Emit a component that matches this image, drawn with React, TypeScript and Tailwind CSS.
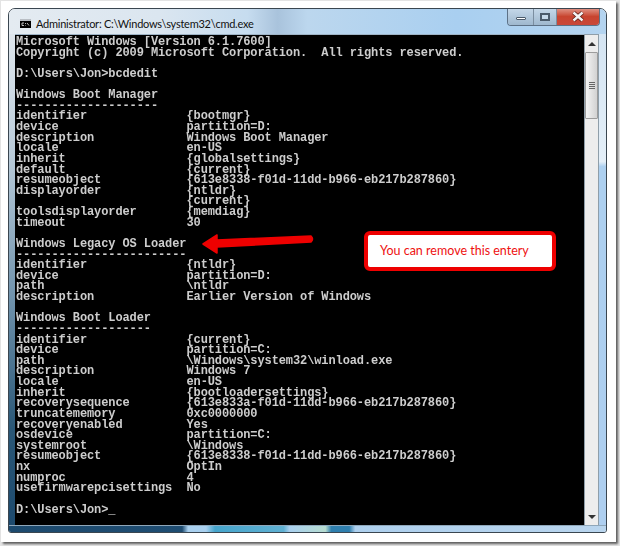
const LINES = [
  "Microsoft Windows [Version 6.1.7600]",
  "Copyright (c) 2009 Microsoft Corporation.  All rights reserved.",
  "",
  "D:\\Users\\Jon>bcdedit",
  "",
  "Windows Boot Manager",
  "--------------------",
  "identifier              {bootmgr}",
  "device                  partition=D:",
  "description             Windows Boot Manager",
  "locale                  en-US",
  "inherit                 {globalsettings}",
  "default                 {current}",
  "resumeobject            {613e8338-f01d-11dd-b966-eb217b287860}",
  "displayorder            {ntldr}",
  "                        {current}",
  "toolsdisplayorder       {memdiag}",
  "timeout                 30",
  "",
  "Windows Legacy OS Loader",
  "------------------------",
  "identifier              {ntldr}",
  "device                  partition=D:",
  "path                    \\ntldr",
  "description             Earlier Version of Windows",
  "",
  "Windows Boot Loader",
  "-------------------",
  "identifier              {current}",
  "device                  partition=C:",
  "path                    \\Windows\\system32\\winload.exe",
  "description             Windows 7",
  "locale                  en-US",
  "inherit                 {bootloadersettings}",
  "recoverysequence        {613e833a-f01d-11dd-b966-eb217b287860}",
  "truncatememory          0xc0000000",
  "recoveryenabled         Yes",
  "osdevice                partition=C:",
  "systemroot              \\Windows",
  "resumeobject            {613e8338-f01d-11dd-b966-eb217b287860}",
  "nx                      OptIn",
  "numproc                 4",
  "usefirmwarepcisettings  No",
  "",
  "D:\\Users\\Jon>_",
];

export default function App() {
  return (
    <div className="h-[546px] w-[620px] overflow-hidden bg-[#e4e4e4] pl-[1px] pt-[1px]">
      {/* photo frame */}
      <div className="h-[541px] w-[615px] bg-white pl-[7px] pt-[7px] shadow-[2px_2px_2px_#5f5f5f]">
        {/* aero window */}
        <div className="relative flex h-[525px] w-[599px] flex-col overflow-hidden rounded-t-[7px] rounded-b-[3px] border border-[#3a4650]">
          <div className="flex h-[25px] shrink-0 items-center bg-[linear-gradient(90deg,#e4ebf1_0%,#dbe6f0_25%,#c6dcef_40%,#a9c3dc_45%,#bcd7ee_50%,#a9cff0_75%,#b4d4f0_100%)] pl-[11px] pt-[4px]">
            <svg width="11" height="9" viewBox="0 0 11 9">
              <rect width="11" height="9" fill="#000" />
              <rect width="11" height="2" fill="#b9bec4" />
              <path d="M2 4h2M2 4v2.5h2M5.5 4v1M5.5 6v.5M7 4l2 2.5" stroke="#e8e8e8" strokeWidth="0.8" fill="none" />
            </svg>
            <span className="ml-[5px] font-['Lato',sans-serif] text-[11px] leading-none tracking-[-0.25px] text-[#111]">
              Administrator: C:\Windows\system32\cmd.exe
            </span>
          </div>

          {/* caption buttons */}
          <div className="absolute right-[6px] top-[-1px] flex h-[18px] overflow-hidden rounded-b-[4px] border border-t-0 border-[#5d7186]">
            <div className="flex w-[26px] items-end justify-center border-r border-[#7b8ea0] bg-gradient-to-b from-[#c6d9ea] to-[#9fb8ce] pb-[5px]">
              <div className="h-[3px] w-[10px] rounded-[1px] border border-[#4b5b6b] bg-white" />
            </div>
            <div className="flex w-[23px] items-center justify-center border-r border-[#7b8ea0] bg-gradient-to-b from-[#c6d9ea] to-[#9fb8ce]">
              <div className="h-[8px] w-[10px] border-2 border-[#4b5b6b] bg-[#c6d9ea]" />
            </div>
            <div className="flex w-[42px] items-center justify-center bg-gradient-to-b from-[#e0988c] via-[#c8442f] to-[#c9483a]">
              <svg width="14" height="11" viewBox="0 0 14 11">
                <path d="M2.5 1.5 L11.5 9.5 M11.5 1.5 L2.5 9.5" stroke="#5a2018" strokeWidth="4" />
                <path d="M2.5 1.5 L11.5 9.5 M11.5 1.5 L2.5 9.5" stroke="#f4f4f4" strokeWidth="2.4" />
              </svg>
            </div>
          </div>

          <div className="flex min-h-0 flex-1">
            <div className="w-[6px] bg-[linear-gradient(180deg,#dfe6ec_0%,#b9cbd9_25%,#6d90aa_55%,#2b5877_80%,#1d4a6e_100%)]" />
            <div className="flex-1 border-t border-[#9fb4c6] bg-black pl-[1px] pt-[2px]">
              {LINES.map((line, i) => (
                <div
                  key={i}
                  className="h-[10.64px] w-fit whitespace-pre font-['Liberation_Mono',monospace] text-[12px] font-bold leading-[10.64px] tracking-[-0.1px] text-[#cdcdcd] blur-[0.4px]"
                >
                  {line}
                </div>
              ))}
            </div>

            {/* scrollbar */}
            <div className="flex w-[15px] flex-col border-x border-t border-[#8f9ea9] bg-[#ededed]">
              <div className="flex h-[17px] shrink-0 items-center justify-center">
                <div className="h-0 w-0 border-x-[4px] border-b-[4px] border-x-transparent border-b-[#333]" />
              </div>
              <div className="flex h-[67px] shrink-0 flex-col items-center justify-center gap-[1px] rounded-[1px] border border-[#9c9c9c] bg-gradient-to-r from-[#f4f4f4] to-[#d2d2d2]">
                <div className="h-[1px] w-[6px] bg-[#666]" />
                <div className="h-[1px] w-[6px] bg-[#666]" />
                <div className="h-[1px] w-[6px] bg-[#666]" />
                <div className="h-[1px] w-[6px] bg-[#666]" />
              </div>
              <div className="flex-1" />
              <div className="flex h-[17px] shrink-0 items-center justify-center">
                <div className="h-0 w-0 border-x-[4px] border-t-[4px] border-x-transparent border-t-[#333]" />
              </div>
            </div>
            <div className="w-[7px] bg-[linear-gradient(180deg,#d5e5f3_0%,#e4eff8_26%,#add0f0_27%,#aecff0_100%)]" />
          </div>

          {/* bottom edge of the glass */}
          <div className="h-[7px] shrink-0 border-t border-[#8fa7ba] bg-[linear-gradient(90deg,#1d4a6e_0%,#1f4d72_29%,#a9d0ef_30%,#a9d0ef_33%,#46a5cc_34.5%,#5fb0d2_46%,#a9d0ef_47%,#b6dcd0_53%,#2f7fae_54%,#2f7fae_57%,#aed0ee_58%,#b9d5ee_100%)]" />

          {/* annotation */}
          <svg className="absolute left-[185px] top-[216px]" width="120" height="30" viewBox="0 0 120 30">
            <path d="M9 19 L23 10 L23 15 L117 11 Q120 14 117 17 L23 22 L23 28 Z" fill="#ee0000" stroke="#ee0000" strokeWidth="1.5" strokeLinejoin="round" />
          </svg>
          <div className="absolute left-[355px] top-[222px] flex h-[40px] w-[192px] items-center rounded-[6px] border-[4px] border-[#ee0000] bg-white pl-[12px] font-['Lato',sans-serif] text-[12.5px] text-[#ee1111]">
            You can remove this entery
          </div>
        </div>
      </div>
    </div>
  );
}
